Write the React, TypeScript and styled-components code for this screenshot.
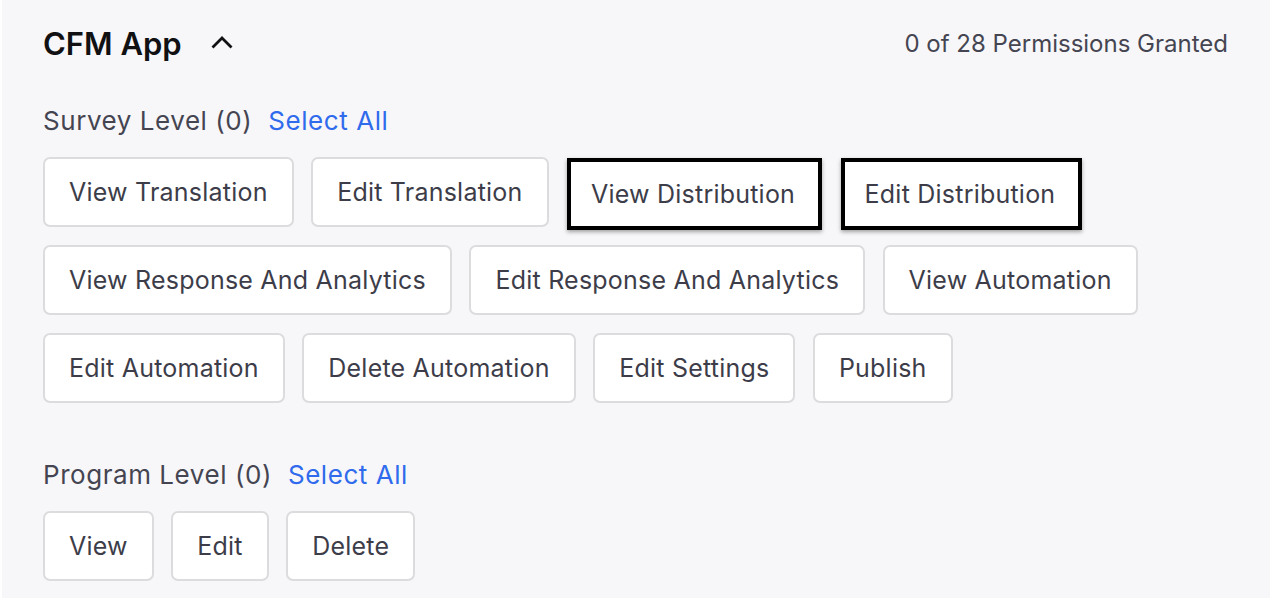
import styled, { createGlobalStyle } from "styled-components";

const GlobalStyle = createGlobalStyle`
  html, body {
    margin: 0;
    padding: 0;
    background: #ffffff;
  }
  body {
    font-family: Inter, "Noto Sans", "Liberation Sans", sans-serif;
  }
`;

const Panel = styled.section`
  margin-left: 2px;
  min-height: 598px;
  box-sizing: border-box;
  background: #f7f7f9;
  padding: 22px 42px 0 41px;
`;

const Header = styled.div`
  display: flex;
  align-items: center;
  justify-content: space-between;
  height: 42px;
`;

const TitleGroup = styled.div`
  display: flex;
  align-items: center;
  gap: 29px;
`;

const Title = styled.h2`
  margin: 0;
  font-size: 31px;
  font-weight: 600;
  color: #111114;
`;

const Toggle = styled.button`
  display: flex;
  align-items: center;
  justify-content: center;
  width: 22px;
  height: 24px;
  padding: 0;
  border: none;
  background: none;
  cursor: pointer;
`;

const Counter = styled.span`
  font-size: 24px;
  color: #454552;
`;

const Group = styled.div<{ $top: number }>`
  margin-top: ${(p) => p.$top}px;
`;

const GroupLabel = styled.div`
  display: flex;
  align-items: center;
  gap: 16px;
  height: 32px;
  font-size: 26px;
  letter-spacing: 0.55px;
  color: #454552;
`;

const SelectAll = styled.button`
  padding: 0;
  border: none;
  background: none;
  font: inherit;
  letter-spacing: inherit;
  color: #2f6bec;
  cursor: pointer;
`;

const Chips = styled.div`
  display: flex;
  flex-wrap: wrap;
  gap: 18px 17.5px;
  margin-top: 21px;
`;

const Chip = styled.button<{ $marked?: boolean }>`
  display: flex;
  align-items: center;
  height: 70px;
  box-sizing: border-box;
  padding: 0 24px;
  font-family: inherit;
  font-size: 25px;
  letter-spacing: 0.22px;
  color: #3d3d4a;
  background: #ffffff;
  border: 2px solid #dcdcdf;
  border-radius: 7px;
  cursor: pointer;
  ${(p) =>
    p.$marked &&
    `
    margin: 1px 0 -3px 1px;
    height: 72px;
    border: 4px solid #000000;
    border-radius: 0;
    padding: 0 23px 0 20px;
    box-shadow: 0 2px 4px rgba(0, 0, 0, 0.35);
  `}
`;

const survey = [
  "View Translation",
  "Edit Translation",
  "View Distribution",
  "Edit Distribution",
  "View Response And Analytics",
  "Edit Response And Analytics",
  "View Automation",
  "Edit Automation",
  "Delete Automation",
  "Edit Settings",
  "Publish",
];

const marked = ["View Distribution", "Edit Distribution"];

const program = ["View", "Edit", "Delete"];

export default function App() {
  return (
    <>
      <GlobalStyle />
      <Panel>
        <Header>
          <TitleGroup>
            <Title>CFM App</Title>
            <Toggle aria-label="Collapse">
              <svg width="22" height="14" viewBox="0 0 22 14">
                <path
                  d="M1.5 11.5 L11 2 L20.5 11.5"
                  fill="none"
                  stroke="#111114"
                  strokeWidth="2.8"
                />
              </svg>
            </Toggle>
          </TitleGroup>
          <Counter>0 of 28 Permissions Granted</Counter>
        </Header>

        <Group $top={40}>
          <GroupLabel>
            Survey Level (0) <SelectAll>Select All</SelectAll>
          </GroupLabel>
          <Chips>
            {survey.map((name) => (
              <Chip key={name} $marked={marked.includes(name)}>
                {name}
              </Chip>
            ))}
          </Chips>
        </Group>

        <Group $top={55}>
          <GroupLabel>
            Program Level (0) <SelectAll>Select All</SelectAll>
          </GroupLabel>
          <Chips>
            {program.map((name) => (
              <Chip key={name}>{name}</Chip>
            ))}
          </Chips>
        </Group>
      </Panel>
    </>
  );
}
